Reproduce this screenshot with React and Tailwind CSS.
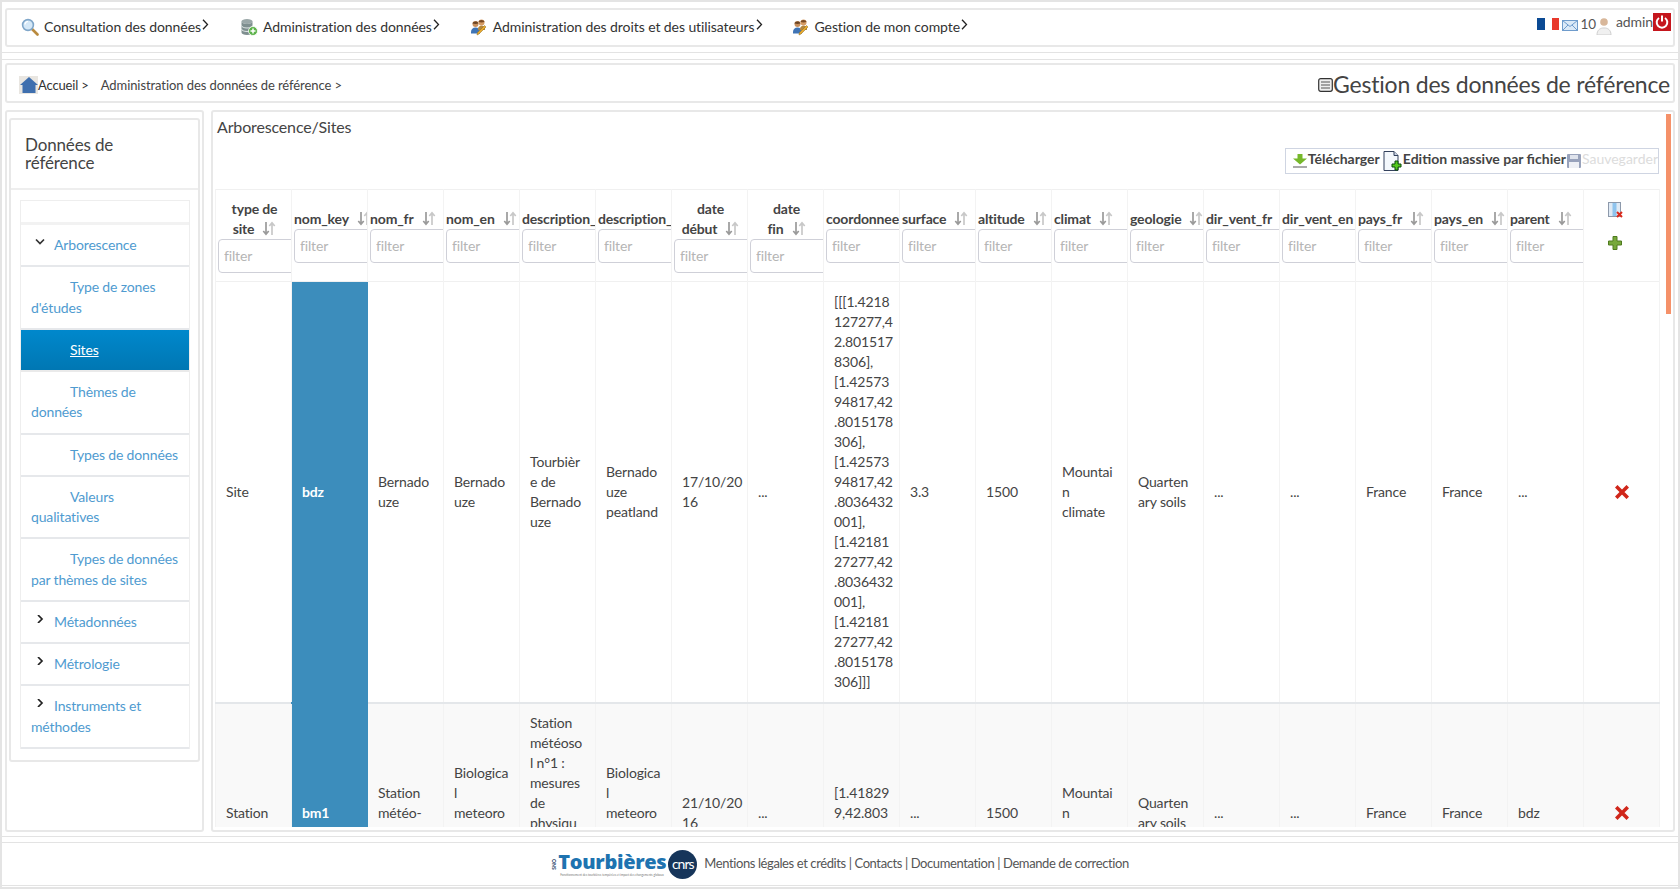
import React from "react";

const font = { fontFamily: '"Lato", "Noto Sans", sans-serif' };

const SearchIcon = () => (
  <svg width="18" height="18" viewBox="0 0 18 18" className="shrink-0">
    <line x1="10.5" y1="10.5" x2="16.5" y2="16.5" stroke="#b98a3e" strokeWidth="2.6" strokeLinecap="round" />
    <circle cx="7" cy="7" r="5.4" fill="#d5e8f7" stroke="#7fa6c9" strokeWidth="1.6" />
    <path d="M4 6.5a3.2 3.2 0 0 1 3-3" fill="none" stroke="#fff" strokeWidth="1.2" />
  </svg>
);

const DbIcon = () => (
  <svg width="18" height="18" viewBox="0 0 18 18" className="shrink-0">
    <ellipse cx="7" cy="3.5" rx="5.5" ry="2.5" fill="#9aa7a8" />
    <path d="M1.5 3.5v11c0 1.4 2.5 2.5 5.5 2.5s5.500-1.100 5.500-2.500v-11c0 1.400-2.500 2.500-5.500 2.500s-5.500-1.100-5.500-2.500z" fill="#7f8f90" />
    <path d="M1.500 7.500c0 1.400 2.500 2.500 5.500 2.500s5.500-1.100 5.500-2.500M1.500 11c0 1.400 2.500 2.500 5.500 2.500s5.500-1.100 5.500-2.500" fill="none" stroke="#dfe5e5" strokeWidth="1" />
    <circle cx="13" cy="13" r="4.500" fill="#5cb24a" stroke="#fff" strokeWidth="0.8" />
    <path d="M13 10.500v5M10.500 13h5" stroke="#fff" strokeWidth="1.500" />
  </svg>
);

const UsersIcon = () => (
  <svg width="18" height="18" viewBox="0 0 18 18" className="shrink-0">
    <path d="M1 14c0-3 2-4.500 4.500-4.500S10 11 10 14v1.500H1z" fill="#3f74b5" />
    <circle cx="5.500" cy="6" r="3" fill="#c88f5c" />
    <path d="M2.500 5.500c0-2.500 5.500-3 6 0-2 .5-4 .5-6 0z" fill="#6b4423" />
    <path d="M8 11c0-2 2-3.500 3.500-3.500S15 9 15 11v1H8z" fill="#b3863f" />
    <circle cx="11.500" cy="4.500" r="3" fill="#d69b63" />
    <path d="M8.500 4c.3-2.800 5.700-2.800 6 0-2 .6-4 .6-6 0z" fill="#7a4a24" />
    <path d="M7 17l2-1 7-7-1.500-1.500-7 7z" fill="#e8a92e" stroke="#8a6a1e" strokeWidth="0.5" />
  </svg>
);

const Chevron = () => (
  <svg width="7" height="11" viewBox="0 0 7 11" className="shrink-0 -mt-[5px] ml-[1px]">
    <path d="M1 .8l4.500 4.700L1 10.200" fill="none" stroke="#222" strokeWidth="1.300" />
  </svg>
);

const SmallChevron = ({ open }) => (
  <svg width="10" height="8" viewBox="0 0 10 8" className="absolute left-[14px] top-[13px]">
    {open ? (
      <path d="M1 1.500l4 4 4-4" fill="none" stroke="#333" strokeWidth="1.700" />
    ) : (
      <path d="M3 0l4 4-4 4" fill="none" stroke="#222" strokeWidth="1.700" />
    )}
  </svg>
);

const SortIcon = () => (
  <svg width="14" height="15" viewBox="0 0 14 15" className="inline-block ml-[8px] -mt-[2px] align-middle">
    <path d="M4 1v12M1.300 10l2.700 3.200L6.700 10" fill="none" stroke="#9a9a9a" strokeWidth="1.700" />
    <path d="M10 14V2M7.300 5L10 1.800 12.700 5" fill="none" stroke="#c8c8c8" strokeWidth="1.700" />
  </svg>
);

const DeleteIcon = () => (
  <svg width="14" height="14" viewBox="0 0 14 14" className="mx-auto block">
    <path d="M2.500 2.500l9 9M11.500 2.500l-9 9" stroke="#d0261a" strokeWidth="3.600" strokeLinecap="square" />
  </svg>
);

const menu = [
  { label: "Consultation des données", icon: <SearchIcon />, ml: "ml-0" },
  { label: "Administration des données", icon: <DbIcon />, ml: "ml-[31px]" },
  { label: "Administration des droits et des utilisateurs", icon: <UsersIcon />, ml: "ml-[30px]" },
  { label: "Gestion de mon compte", icon: <UsersIcon />, ml: "ml-[29px]" },
];

const sideItems = [
  { label: "Arborescence", chevron: "open", top: true },
  { label: "Type de zones d'études", sub: true },
  { label: "Sites", sub: true, active: true },
  { label: "Thèmes de données", sub: true },
  { label: "Types de données", sub: true },
  { label: "Valeurs qualitatives", sub: true },
  { label: "Types de données par thèmes de sites", sub: true },
  { label: "Métadonnées", chevron: "closed", top: true },
  { label: "Métrologie", chevron: "closed", top: true },
  { label: "Instruments et méthodes", chevron: "closed", top: true },
];

const columns = [
  { lines: ["type de", "site"], center: true },
  { lines: ["nom_key"] },
  { lines: ["nom_fr"] },
  { lines: ["nom_en"] },
  { lines: ["description_fr"], noSort: true },
  { lines: ["description_en"], noSort: true },
  { lines: ["date", "début"], center: true },
  { lines: ["date", "fin"], center: true },
  { lines: ["coordonnees"], noSort: true },
  { lines: ["surface"] },
  { lines: ["altitude"] },
  { lines: ["climat"] },
  { lines: ["geologie"] },
  { lines: ["dir_vent_fr"], noSort: true },
  { lines: ["dir_vent_en"], noSort: true },
  { lines: ["pays_fr"] },
  { lines: ["pays_en"] },
  { lines: ["parent"] },
];

const rows = [
  [
    "Site",
    "bdz",
    "Bernado\nuze",
    "Bernado\nuze",
    "Tourbièr\ne de\nBernado\nuze",
    "Bernado\nuze\npeatland",
    "17/10/20\n16",
    "...",
    "[[[1.4218\n127277,4\n2.801517\n8306],\n[1.42573\n94817,42\n.8015178\n306],\n[1.42573\n94817,42\n.8036432\n001],\n[1.42181\n27277,42\n.8036432\n001],\n[1.42181\n27277,42\n.8015178\n306]]]",
    "3.3",
    "1500",
    "Mountai\nn\nclimate",
    "Quarten\nary soils",
    "...",
    "...",
    "France",
    "France",
    "...",
  ],
  [
    "Station",
    "bm1",
    "Station\nmétéo-\nsol n°1",
    "Biologica\nl\nmeteoro\nlogical\nstation",
    "Station\nmétéoso\nl n°1 :\nmesures\nde\nphysiqu\ne du sol\net de\nmétéoro\nlogie",
    "Biologica\nl\nmeteoro\nlogical\nstation",
    "21/10/20\n16",
    "...",
    "[1.41829\n9,42.803\n133]",
    "...",
    "1500",
    "Mountai\nn\nclimate",
    "Quarten\nary soils",
    "...",
    "...",
    "France",
    "France",
    "bdz",
  ],
];

const Header = () => (
  <div className="h-[51px] border-b border-[#e3e3e3] pt-[6px] px-[3px] shrink-0">
    <div className="h-[39px] border-2 border-[#e8e8e8] rounded-[3px] flex items-center pl-[14px] pr-[2px] pb-[2px] relative text-[14px] text-[#333] tracking-[-0.080px]">
      {menu.map((m) => (
        <div key={m.label} className={`flex items-center ${m.ml}`}>
          {m.icon}
          <span className="ml-[5px] whitespace-nowrap">{m.label}</span>
          <Chevron />
        </div>
      ))}
      <div className="ml-auto self-start mt-[3px] flex items-start text-[#555]">
        <div className="flex w-[22px] h-[12px] mt-[5px]">
          <div className="flex-1 bg-[#0b4a94]" />
          <div className="flex-1 bg-white" />
          <div className="flex-1 bg-[#e8392c]" />
        </div>
        <svg width="16" height="11" viewBox="0 0 16 11" className="ml-[3px] mt-[7px]">
          <rect x="0.500" y="0.500" width="15" height="10" fill="#dbe9f7" stroke="#6f9ccc" />
          <path d="M.5 .5l7.500 6 7.500-6M.5 10.500l5.500-5.500M15.500 10.500l-5.500-5.500" fill="none" stroke="#6f9ccc" />
        </svg>
        <span className="ml-[2px] mt-[1px] text-[13.500px] leading-[20px]">10</span>
        <svg width="16" height="18" viewBox="0 0 16 18" className="mt-[4px]">
          <circle cx="8" cy="5" r="3.800" fill="#d8b79a" />
          <path d="M1 18c0-5 3-6.500 5.500-7h3c2.500.5 5.500 2 5.500 7z" fill="#f0f0f0" stroke="#cfcfcf" />
        </svg>
        <span className="ml-[4px] text-[14px] leading-[20px] -mt-[1px]">admin</span>
        <div className="w-[18px] h-[18px] bg-[#c5161d] flex items-center justify-center">
          <svg width="14" height="14" viewBox="0 0 14 14">
            <path d="M4 3a5.300 5.300 0 1 0 6 0" fill="none" stroke="#fff" strokeWidth="2" />
            <path d="M7 0.500v6" stroke="#fff" strokeWidth="2" />
          </svg>
        </div>
      </div>
    </div>
  </div>
);

const Breadcrumb = () => (
  <div className="h-[40px] border-2 border-[#e8e8e8] rounded-[3px] flex items-center pl-[12px] pr-[3px] text-[13px] text-[#333] shrink-0">
    <div className="w-[19px] h-[18px] bg-[#e9e6e1] mt-[4px] flex items-center justify-center shrink-0">
      <svg width="18" height="16" viewBox="0 0 18 16">
        <path d="M9 0L0 8h2.500v8h13V8H18z" fill="#3f6fae" />
      </svg>
    </div>
    <span className="whitespace-nowrap mt-[6px]">Accueil &gt;</span>
    <span className="ml-[12px] mt-[6px] whitespace-nowrap text-[#444] tracking-[-0.080px]">Administration des données de référence &gt;</span>
    <div className="ml-auto flex items-center text-[#444] mt-[1px]">
      <svg width="15" height="14" viewBox="0 0 15 14" className="mt-[2px]">
        <rect x="0.700" y="0.700" width="13.600" height="12.600" rx="2" fill="#eee" stroke="#333" strokeWidth="1.200" />
        <path d="M3 4h9M3 7h9M3 10h9" stroke="#555" strokeWidth="1" />
      </svg>
      <span className="text-[23px] leading-[30px] tracking-[-0.200px] whitespace-nowrap">Gestion des données de référence</span>
    </div>
  </div>
);

const Sidebar = () => (
  <div className="w-[199px] shrink-0 border-2 border-[#e8e8e8] rounded-[3px] pt-[6px] pb-[3px] px-[2px]">
    <div className="border-2 border-[#e8e8e8] rounded-[3px] h-[644px]">
      <div className="h-[70px] border-b-2 border-[#eeeeee] pl-[14px] pt-[16px] text-[17px] leading-[18px] text-[#444]">
        Données de
        <br />
        référence
      </div>
      <div className="ml-[9px] mr-[8px] mt-[10px] border-x border-[#eeeeee]">
        <div className="h-[22px] border-t border-[#eeeeee]" />
        <div className="h-[3px] bg-[#f2f2f2]" />
        {sideItems.map((item) => (
          <div
            key={item.label}
            className={`relative pl-[10px] pr-[7px] py-[10px] text-[14px] leading-[20.250px] border-b-2 ${
              item.active
                ? "bg-gradient-to-b from-[#0088cc] to-[#0077b3] text-white border-[#eaeaea]"
                : "text-[#4f9bd0] border-[#e6e8eb]"
            }`}
          >
            {item.chevron && <SmallChevron open={item.chevron === "open"} />}
            <span className={item.sub ? "ml-[39px]" : "ml-[23px]"}>
              <span className={item.active ? "underline" : ""}>{item.label}</span>
            </span>
          </div>
        ))}
      </div>
    </div>
  </div>
);

const Table = () => (
  <table className="table-fixed border-collapse w-[1444px] text-[14px] leading-[20px] text-[#444]">
    <thead>
      <tr className="h-[92px] border-y border-[#f0f0f0]">
        {columns.map((c) => (
          <th key={c.lines.join()} className={`w-[76px] p-0 pt-[8px] pb-[8px] border-x border-[#f3f3f3] align-middle font-bold overflow-hidden ${c.center ? "text-center" : "text-left"}`}>
            <div className="whitespace-nowrap overflow-hidden pl-[2px] text-[#444]">
              {c.lines.map((l, i) => (
                <div key={l}>
                  {l}
                  {i === c.lines.length - 1 && !c.noSort && <SortIcon />}
                </div>
              ))}
            </div>
            <div className="overflow-hidden pl-[2px]">
              <input
                readOnly
                placeholder="filter"
                className="w-[90px] h-[34px] px-[5px] border border-[#cfd0d8] rounded-[4px] text-[14px] font-normal text-left placeholder:text-[#b5b5b5] bg-white"
              />
            </div>
          </th>
        ))}
        <th className="w-[76px] p-0 border-x border-[#f3f3f3] align-top">
          <div className="flex flex-col items-center mr-[13px] mt-[12px]">
            <svg width="15" height="16" viewBox="0 0 15 16">
              <rect x="0.500" y="0.500" width="12" height="14" fill="#dfeaf5" stroke="#8d99ab" />
              <rect x="4.500" y="1" width="4" height="13" fill="#8fc4ee" />
              <path d="M9 10l5 5M14 10l-5 5" stroke="#d92a1c" strokeWidth="2" />
            </svg>
            <svg width="14" height="14" viewBox="0 0 14 14" className="mt-[18px]">
              <path d="M5 .5h4v4.500h4.500v4H9v4.500H5V9H.5V5H5z" fill="#76a83a" stroke="#4f7a1f" />
            </svg>
          </div>
        </th>
      </tr>
    </thead>
    <tbody>
      {rows.map((row, r) => (
        <tr key={r} className={`border-b-2 border-[#e4e7ea] ${r === 1 ? "bg-[#f9f9f9]" : "bg-white"}`}>
          {row.map((cell, i) => (
            <td
              key={i}
              className={`pl-[10px] pr-0 align-middle whitespace-pre-line ${r === 1 ? "py-[9px]" : "py-[10px]"} ${
                i === 1 ? "bg-[#3c8dbc] text-white font-bold border-x border-b-2 border-[#3c8dbc]" : "border-x border-[#f3f3f3]"
              }`}
            >
              {cell}
            </td>
          ))}
          <td className="p-0 border-x border-[#f3f3f3] align-middle">
            <DeleteIcon />
          </td>
        </tr>
      ))}
    </tbody>
  </table>
);

const Main = () => (
  <div className="flex-1 min-w-0 border-2 border-[#e8e8e8] rounded-[3px] relative pl-[2px] pb-[3px] flex flex-col overflow-hidden">
    <div className="text-[16px] leading-[20px] text-[#444] pl-[2px] pt-[5px] h-[36px]">Arborescence/Sites</div>
    <div className="h-[26px] self-end mr-[14px] border border-[#cfd5e2] flex items-center text-[14px] font-bold text-[#444] whitespace-nowrap tracking-normal">
      <svg width="14" height="14" viewBox="0 0 14 14" className="ml-[7px] mr-[1px]">
        <path d="M4.500 0h5v4.500H14L7 10.500 0 4.500h4.500z" fill="#76b82a" />
        <rect y="12" width="14" height="2" fill="#aaa" />
      </svg>
      <span className="-mt-[6px]">Télécharger</span>
      <svg width="20" height="20" viewBox="0 0 20 20" className="ml-[3px]">
        <path d="M1 .5h10l4 4v15H1z" fill="#f4f8fc" stroke="#33415c" />
        <path d="M11 .5v4h4" fill="#cbd5e5" stroke="#33415c" />
        <path d="M12 10h3v3h3v3h-3v3h-3v-3H9v-3h3z" fill="#55c81e" stroke="#0a4a0a" />
      </svg>
      <span className="-mt-[6px]">Edition massive par fichier</span>
      <svg width="14" height="14" viewBox="0 0 14 14" className="ml-[1px]">
        <rect width="14" height="14" rx="1" fill="#98a2bb" />
        <rect x="3" y="1" width="8" height="4" fill="#dfe3ec" />
        <rect x="2" y="8" width="10" height="6" fill="#eef0f5" />
      </svg>
      <span className="-mt-[6px] font-normal text-[#dcdcdc] ml-[1px]">Sauvegarder</span>
    </div>
    <div className="mt-[15px] flex-1 min-h-0 overflow-hidden">
      <Table />
    </div>
    <div className="absolute right-[2px] top-[2px] w-[5px] h-[200px] bg-[#f59169]" />
  </div>
);

const Footer = () => (
  <div className="h-[44px] border-y border-[#e3e3e3] flex items-center justify-center shrink-0 text-[13px] tracking-[-0.400px] text-[#555] -mt-[1px]">
    <div className="relative flex items-center pr-[2px] tracking-normal">
      <span className="text-[5px] leading-[6px] font-bold text-[#17375e] [writing-mode:vertical-rl] rotate-180 mr-[1px]">SNO</span>
      <div className="relative w-[108px] h-[30px]">
        <span className="absolute left-0 top-[1px] text-[20px] leading-[24px] font-extrabold tracking-[-0.300px] text-[#1e73b0] whitespace-nowrap" style={{ fontFamily: '"Open Sans", sans-serif' }}>
          Tourbières
        </span>
        <span className="absolute left-[2px] top-[24px] text-[3px] leading-[4px] text-[#777] whitespace-nowrap">
          Fonctionnement des tourbières tempérées et impact des changements globaux
        </span>
      </div>
      <div className="w-[29px] h-[29px] rounded-full bg-[#16355a] flex items-center justify-center text-[14px] tracking-[-1px] leading-none text-white ml-[2px]">
        cnrs
      </div>
    </div>
    <span className="ml-[5px] whitespace-nowrap">Mentions légales et crédits | Contacts | Documentation | Demande de correction</span>
  </div>
);

export default function App() {
  return (
    <div className="w-[1680px] h-[889px] bg-[#e4e4e4] py-[2px] px-[2px] overflow-hidden tracking-[-0.150px]" style={font}>
      <div className="h-full bg-white flex flex-col">
        <Header />
        <div className="h-[6px] shrink-0" />
        <div className="h-[778px] border-y border-[#e3e3e3] px-[3px] pt-[3px] flex flex-col shrink-0">
          <Breadcrumb />
          <div className="flex gap-[7px] mt-[7px] h-[722px]">
            <Sidebar />
            <Main />
          </div>
        </div>
        <div className="h-[6px] shrink-0" />
        <Footer />
      </div>
    </div>
  );
}
